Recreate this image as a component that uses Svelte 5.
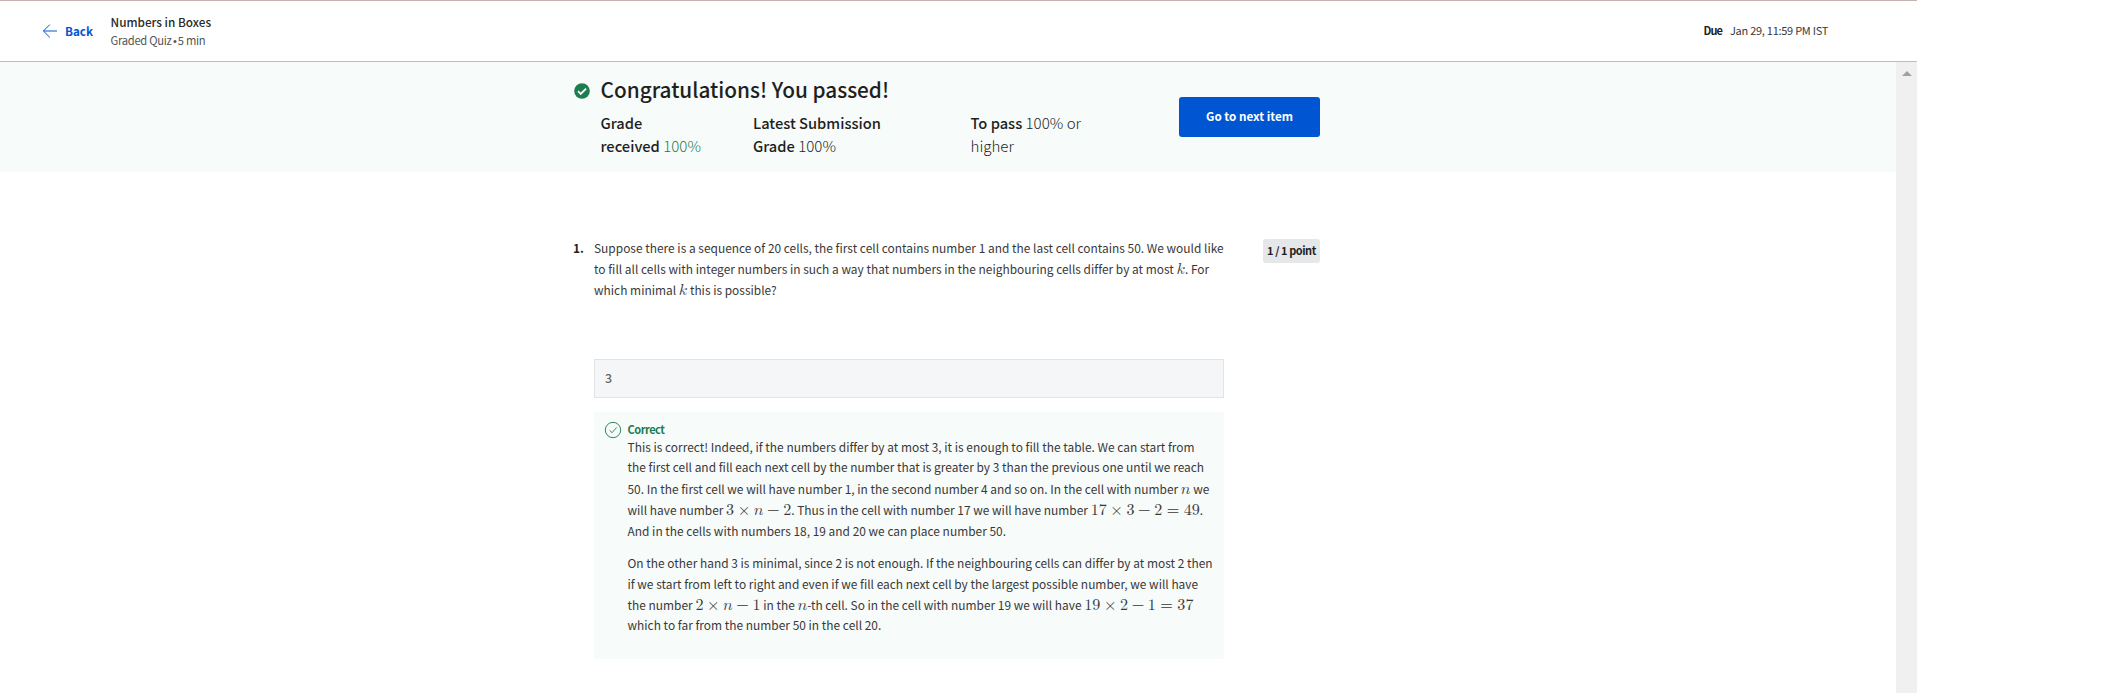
<script>
  const question = [
    { parts: ['Suppose there is a sequence of 20 cells, the first cell contains number 1 and the last cell contains 50. We would like'] },
    { parts: ['to fill all cells with integer numbers in such a way that numbers in the neighbouring cells differ by at most ', { m: '𝑘' }, '. For'] },
    { parts: ['which minimal ', { m: '𝑘' }, ' this is possible?'] }
  ];

  const feedback = [
    [
      { parts: ['This is correct! Indeed, if the numbers differ by at most 3, it is enough to fill the table. We can start from'] },
      { parts: ['the first cell and fill each next cell by the number that is greater by 3 than the previous one until we reach'] },
      { kind: 'symbol', parts: ['50. In the first cell we will have number 1, in the second number 4 and so on. In the cell with number ', { m: '𝑛' }, ' we'] },
      { kind: 'formula', parts: ['will have number ', { m: '3 × 𝑛 − 2' }, '. Thus in the cell with number 17 we will have number ', { m: '17 × 3 − 2 = 49' }, '.'] },
      { parts: ['And in the cells with numbers 18, 19 and 20 we can place number 50.'] }
    ],
    [
      { parts: ['On the other hand 3 is minimal, since 2 is not enough. If the neighbouring cells can differ by at most 2 then'] },
      { parts: ['if we start from left to right and even if we fill each next cell by the largest possible number, we will have'] },
      { kind: 'symbol', parts: ['the number ', { m: '2 × 𝑛 − 1' }, ' in the ', { m: '𝑛' }, '-th cell. So in the cell with number 19 we will have ', { m: '19 × 2 − 1 = 37' }] },
      { parts: ['which to far from the number 50 in the cell 20.'] }
    ]
  ];

  const opClass = (t) => (t === '=' ? 'rel' : t === '×' || t === '−' ? 'bin' : 'atom');
</script>

{#snippet line(l)}
  <div class="line {l.kind ?? ''}">{#each l.parts as p}{#if typeof p === 'string'}{p}{:else}<span class="math">{#each p.m.split(' ') as t}<span class={opClass(t)}>{t}</span>{/each}</span>{/if}{/each}</div>
{/snippet}

<div class="page">
  <header>
    <a class="back" href="#back">
      <svg width="15" height="14" viewBox="0 0 15 14" fill="none" stroke="#0056d2" stroke-width="1"><path d="M7.8.6 1.4 7l6.4 6.4M1.4 7H15" /></svg>
      <span>Back</span>
    </a>
    <div class="item">
      <div class="name">Numbers in Boxes</div>
      <div class="kind">Graded Quiz <span class="dot">•</span> 5 min</div>
    </div>
    <div class="due"><b>Due</b><span>Jan 29, 11:59 PM IST</span></div>
  </header>

  <div class="body">
    <main>
      <section class="banner">
        <svg class="passed" width="16" height="16" viewBox="0 0 16 16"><circle cx="8" cy="8" r="7.8" fill="#1d7c50" /><path d="M4 8.2l2.7 2.7L12.1 5.6" fill="none" stroke="#fff" stroke-width="1.8" /></svg>
        <div class="result">
          <h1>Congratulations! You passed!</h1>
          <div class="grades">
            <div class="g1"><b>Grade<br />received</b> <span class="green">100%</span></div>
            <div class="g2"><b>Latest Submission<br />Grade</b> 100%</div>
            <div class="g3"><b>To pass</b> 100% or<br />higher</div>
          </div>
        </div>
        <button>Go to next item</button>
      </section>

      <section class="question">
        <div class="number">1.</div>
        <div class="content">
          <div class="prompt">{#each question as l}{@render line(l)}{/each}</div>
          <div class="answer">3</div>
          <div class="feedback">
            <svg width="18" height="18" viewBox="0 0 18 18" fill="none" stroke="#2a8a5f" stroke-width="1"><circle cx="9" cy="9" r="7.7" /><path d="M5.6 9.3l2.4 2.4 4.6-5.2" /></svg>
            <div class="explain">
              <div class="verdict">Correct</div>
              {#each feedback as p}<div class="para">{#each p as l}{@render line(l)}{/each}</div>{/each}
            </div>
          </div>
        </div>
        <div class="points">1 / 1 point</div>
      </section>
    </main>
    <div class="scrollbar"><svg width="10" height="5" viewBox="0 0 10 5"><path d="M0 5 5 0l5 5z" fill="#a0a0a0" /></svg></div>
  </div>
</div>

<style>
  :global(body) { background: #fff; overflow: hidden; }
  .page {
    width: 1917px; height: 693px; display: flex; flex-direction: column; box-sizing: border-box;
    border-top: 1px solid #c4b3b0; color: #383838; overflow: hidden;
    font-family: "Noto Sans CJK SC", "Noto Sans", sans-serif; font-size: 11.92px;
  }
  header { height: 60px; flex: none; display: flex; align-items: center; border-bottom: 1px solid #bdbdbd; padding: 0 89px 0 41.5px; }
  .back { display: flex; align-items: center; gap: 8.5px; width: 69px; color: #0056d2; font-weight: 700; font-size: 11.7px; text-decoration: none; line-height: 16px; }
  .back svg { display: block; }
  .back span { margin-top: -1px; }
  .name { font-weight: 500; font-size: 11.77px; line-height: 18px; color: #2a2a2a; }
  .kind { font-size: 11.2px; letter-spacing: -.27px; line-height: 18px; color: #555; }
  .dot { font-family: "Liberation Sans", sans-serif; font-size: 11px; margin: 0 -1px; }
  .due { margin: -2px 0 0 auto; font-size: 11px; line-height: 16px; display: flex; gap: 8px; color: #383838; }
  .due b { letter-spacing: -.9px; color: #1f1f1f; }
  .due span { letter-spacing: -.27px; }
  .body { flex: 1; display: flex; min-height: 0; }
  main { flex: 1; }
  .scrollbar { width: 21px; background: #f1f0f0; display: flex; justify-content: center; padding-top: 9px; box-sizing: border-box; }
  .banner { height: 110px; background: #f7fbfa; display: flex; align-items: flex-start; padding-left: 573.5px; box-sizing: border-box; }
  .passed { margin-top: 21px; }
  .result { width: 578.5px; padding: 12px 0 0 11px; box-sizing: content-box; }
  h1 { margin: 0; font-weight: 500; font-size: 20.77px; line-height: 31px; color: #1f1f1f; }
  .grades { display: flex; font-size: 15.1px; line-height: 23.3px; font-weight: 300; margin-top: 6px; white-space: nowrap; color: #1f1f1f; }
  .grades b { font-weight: 500; font-size: 14.68px; }
  .g1 { width: 152.5px; }
  .g2 { width: 217.5px; }
  .green { color: #1d7c50; }
  button { width: 141px; height: 40px; margin-top: 35px; border: 0; border-radius: 3px; background: #0056d2; color: #fff; font: 700 11.65px/16px "Noto Sans CJK SC", sans-serif; padding: 0 0 2px; }
  .question { display: flex; align-items: flex-start; padding: 65px 0 0 573px; }
  .number { width: 21px; font-weight: 700; line-height: 21px; color: #1f1f1f; }
  .content { width: 630px; }
  .line { white-space: nowrap; line-height: 20.4px; letter-spacing: .012px; font-variant-ligatures: common-ligatures; }
  .prompt { height: 122px; }
  .prompt .line { line-height: 21px; }
  .symbol { padding-top: .7px; }
  .formula { padding-top: 1.4px; }
  .math { font-family: math, "Liberation Serif", serif; font-size: 16.1px; line-height: 0; white-space: nowrap; }
  .bin { margin: 0 .222em; }
  .rel { margin: 0 .278em; }
  .answer { height: 39px; box-sizing: border-box; border: 1px solid #e2e3e4; background: #f5f6f8; color: #666; padding-left: 10px; font-size: 12.5px; font-weight: 500; line-height: 36px; }
  .feedback { margin-top: 14px; height: 247px; box-sizing: border-box; background: #f7fbfa; display: flex; padding: 9px 0 0 9.5px; gap: 6px; }
  .verdict { font-weight: 700; font-size: 11px; letter-spacing: -.47px; color: #1d7c50; line-height: 17px; height: 16px; }
  .para { margin-bottom: 12.3px; }
  .points { margin: 2px 0 0 39px; width: 57px; height: 24px; border-radius: 3px; background: #e5e7e8; text-align: center; font-weight: 700; font-size: 11px; letter-spacing: -.45px; line-height: 23px; color: #1f1f1f; white-space: nowrap; }
</style>
